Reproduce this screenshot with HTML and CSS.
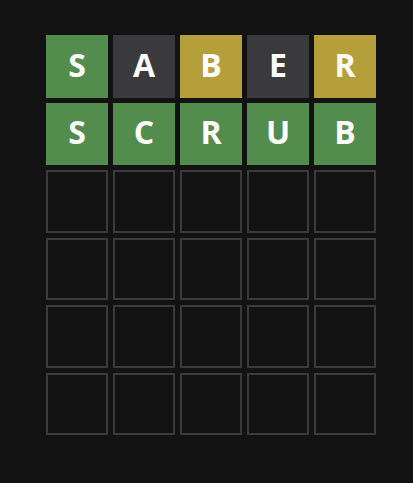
FILE: index.html
```html
<!DOCTYPE html>
<html>
<head>
<meta charset="utf-8">
<link rel="stylesheet" href="styles.css">
</head>
<body>
<div class="board">
  <div class="row">
    <div class="tile correct">S</div>
    <div class="tile absent">A</div>
    <div class="tile present">B</div>
    <div class="tile absent">E</div>
    <div class="tile present">R</div>
  </div>
  <div class="row">
    <div class="tile correct">S</div>
    <div class="tile correct">C</div>
    <div class="tile correct">R</div>
    <div class="tile correct">U</div>
    <div class="tile correct">B</div>
  </div>
  <div class="row">
    <div class="tile empty"></div><div class="tile empty"></div><div class="tile empty"></div><div class="tile empty"></div><div class="tile empty"></div>
  </div>
  <div class="row">
    <div class="tile empty"></div><div class="tile empty"></div><div class="tile empty"></div><div class="tile empty"></div><div class="tile empty"></div>
  </div>
  <div class="row">
    <div class="tile empty"></div><div class="tile empty"></div><div class="tile empty"></div><div class="tile empty"></div><div class="tile empty"></div>
  </div>
  <div class="row">
    <div class="tile empty"></div><div class="tile empty"></div><div class="tile empty"></div><div class="tile empty"></div><div class="tile empty"></div>
  </div>
</div>
</body>
</html>
```

FILE: styles.css
```css
html, body {
  margin: 0;
  padding: 0;
  background: #121213;
  height: 100%;
}

body {
  font-family: "Open Sans", "DejaVu Sans", sans-serif;
}

.board {
  box-sizing: border-box;
  width: 350px;
  height: 420px;
  margin: 25px 0 0 36px;
  padding: 10px;
  display: grid;
  grid-template-rows: repeat(6, 1fr);
  gap: 5px;
}

.row {
  display: grid;
  grid-template-columns: repeat(5, 1fr);
  gap: 5px;
}

.tile {
  box-sizing: border-box;
  display: flex;
  align-items: center;
  justify-content: center;
  color: #ffffff;
  font-size: 32px;
  font-weight: 700;
  line-height: 1;
  padding-bottom: 3px;
  text-transform: uppercase;
}

.tile.empty {
  border: 2px solid #3a3a3c;
}

.tile.correct {
  background: #538d4e;
}

.tile.present {
  background: #b59f3b;
}

.tile.absent {
  background: #3a3a3c;
}
```
